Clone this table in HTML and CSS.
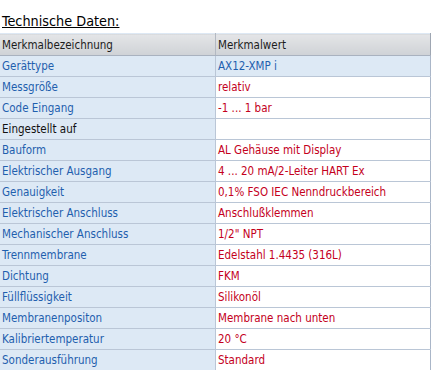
FILE: index.html
```html
<!DOCTYPE html>
<html lang="de">
<head>
<meta charset="utf-8">
<link rel="stylesheet" href="styles.css">
</head>
<body>
<div class="title"><span>Technische Daten:</span></div>
<table class="spec">
  <thead>
    <tr><th class="name">Merkmalbezeichnung</th><th class="val">Merkmalwert</th></tr>
  </thead>
  <tbody>
    <tr><td class="name">Gerättype</td><td class="val blue">AX12-XMP i</td></tr>
    <tr><td class="name">Messgröße</td><td class="val">relativ</td></tr>
    <tr><td class="name">Code Eingang</td><td class="val">-1 ... 1 bar</td></tr>
    <tr><td class="name black">Eingestellt auf</td><td class="val"></td></tr>
    <tr><td class="name">Bauform</td><td class="val">AL Gehäuse mit Display</td></tr>
    <tr><td class="name">Elektrischer Ausgang</td><td class="val">4 ... 20 mA/2-Leiter HART Ex</td></tr>
    <tr><td class="name">Genauigkeit</td><td class="val">0,1% FSO IEC Nenndruckbereich</td></tr>
    <tr><td class="name">Elektrischer Anschluss</td><td class="val">Anschlußklemmen</td></tr>
    <tr><td class="name">Mechanischer Anschluss</td><td class="val">1/2" NPT</td></tr>
    <tr><td class="name">Trennmembrane</td><td class="val">Edelstahl 1.4435 (316L)</td></tr>
    <tr><td class="name">Dichtung</td><td class="val">FKM</td></tr>
    <tr><td class="name">Füllflüssigkeit</td><td class="val">Silikonöl</td></tr>
    <tr><td class="name">Membranenpositon</td><td class="val">Membrane nach unten</td></tr>
    <tr><td class="name">Kalibriertemperatur</td><td class="val">20 °C</td></tr>
    <tr><td class="name">Sonderausführung</td><td class="val">Standard</td></tr>
  </tbody>
</table>
</body>
</html>
```
FILE: styles.css
```css
html, body {
  margin: 0;
  padding: 0;
  background: #ffffff;
}
body {
  font-family: "DejaVu Sans Condensed", "DejaVu Sans", Verdana, sans-serif;
  font-size: 11.5px;
}
.title {
  height: 33px;
  box-sizing: border-box;
  padding: 13px 0 0 2px;
  font-size: 14.3px;
  line-height: 17px;
  color: #000000;
}
.title span {
  text-decoration: underline;
}
.spec {
  border-collapse: collapse;
  width: 431px;
  table-layout: fixed;
}
.spec th, .spec td {
  height: 20px;
  padding: 0 0 0 2px;
  text-align: left;
  font-weight: normal;
  vertical-align: middle;
  white-space: nowrap;
  line-height: 14px;
}
.spec th {
  height: 21px;
  color: #1c1c1c;
  background: linear-gradient(#e4e5e7, #cfd2d6);
  border-top: 1px solid #dde8f4;
  border-bottom: 1px solid #a9b2bf;
}
.spec th.name {
  width: 213px;
  border-right: 1px solid #b3b9c2;
}
.spec th.val {
  border-right: 1px solid #9ea6b2;
}
.spec td {
  border-bottom: 1px solid #bac6d6;
}
.spec td.name {
  background: #dde9f5;
  color: #1f5fae;
  border-right: 1px solid #bac6d6;
}
.spec td.val {
  background: #ffffff;
  color: #c4001c;
  border-right: 1px solid #aab6c8;
}
.spec td.val.blue {
  background: #dde9f5;
  color: #1f5fae;
}
.spec td.black {
  color: #111111;
}
.spec tbody tr:last-child td {
  border-bottom: none;
}
```
